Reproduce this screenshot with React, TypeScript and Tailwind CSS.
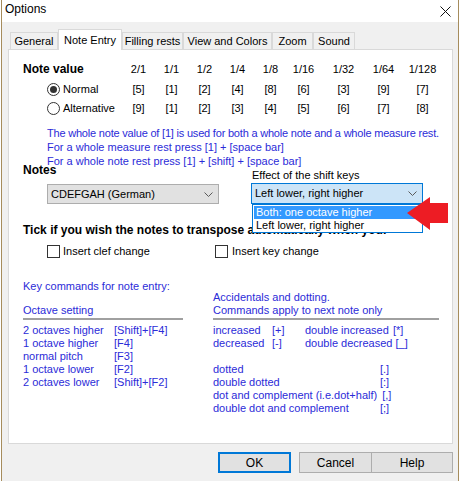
import React from "react";

const fractions = ["2/1", "1/1", "1/2", "1/4", "1/8", "1/16", "1/32", "1/64", "1/128"];
const normalKeys = ["[5]", "[1]", "[2]", "[4]", "[8]", "[6]", "[3]", "[9]", "[7]"];
const altKeys = ["[9]", "[1]", "[2]", "[3]", "[4]", "[5]", "[6]", "[7]", "[8]"];

const octaveRows: [string, string][] = [
  ["2 octaves higher", "[Shift]+[F4]"],
  ["1 octave higher", "[F4]"],
  ["normal pitch", "[F3]"],
  ["1 octave lower", "[F2]"],
  ["2 octaves lower", "[Shift]+[F2]"],
];

const dotRows: [string, string][] = [
  ["dotted", "[.]"],
  ["double dotted", "[:]"],
  ["dot and complement (i.e.dot+half)", "[,]"],
  ["double dot and complement", "[;]"],
];

function Chevron() {
  return (
    <svg width="9" height="5" viewBox="0 0 9 5" className="shrink-0">
      <path d="M0.5 0.5 L4.5 4.5 L8.5 0.5" stroke="#5a5a5a" strokeWidth="1" fill="none" />
    </svg>
  );
}

function Radio({ checked }: { checked?: boolean }) {
  return (
    <span className="w-[13px] h-[13px] rounded-full border border-[#333333] bg-white flex items-center justify-center shrink-0">
      {checked && <span className="w-[7px] h-[7px] rounded-full bg-[#333333]" />}
    </span>
  );
}

function Checkbox() {
  return <span className="w-[13px] h-[13px] border border-[#333333] bg-white shrink-0" />;
}

function Tab({ label, width, active }: { label: string; width: string; active?: boolean }) {
  if (active) {
    return (
      <div
        className={`${width} h-[21px] -mb-px relative z-10 bg-white border border-b-0 border-[#d9d9d9] flex items-start justify-center pt-[3px] text-[11px] leading-[14px]`}
      >
        {label}
      </div>
    );
  }
  return (
    <div
      className={`${width} h-[17px] bg-[#f0f0f0] border border-b-0 border-[#d9d9d9] flex items-center justify-center text-[11px] leading-[14px]`}
    >
      {label}
    </div>
  );
}

export default function App() {
  return (
    <div className="w-[461px] h-[481px] bg-white pl-px pr-[2px] font-['Liberation_Sans',Arial,sans-serif] text-[11px] text-black">
      <div className="relative h-full border-x border-[#a68c5c] bg-[#f0f0f0] flex flex-col">
        {/* title bar */}
        <div className="h-[22px] bg-white flex items-start justify-between">
          <span className="text-[12px] leading-[18px] pl-[3px]">Options</span>
          <svg width="11" height="11" viewBox="0 0 11 11" className="mt-[6px] mr-[7px]">
            <path d="M0.5 0.5 L10.5 10.5 M10.5 0.5 L0.5 10.5" stroke="#111" strokeWidth="1" />
          </svg>
        </div>

        {/* tabs */}
        <div className="h-[27px] flex items-end pl-[8px]">
          <Tab label="General" width="w-[48px]" />
          <Tab label="Note Entry" width="w-[64px]" active />
          <Tab label="Filling rests" width="w-[61px]" />
          <Tab label="View and Colors" width="w-[89px]" />
          <Tab label="Zoom" width="w-[41px]" />
          <Tab label="Sound" width="w-[42px]" />
        </div>

        {/* tab page */}
        <div className="ml-[6px] w-[445px] h-[395px] border border-[#d9d9d9] bg-white pl-[14px] pt-[9px] flex flex-col overflow-hidden">
          {/* note value table */}
          <div className="grid grid-cols-[99px_33px_33px_33px_33px_33px_33px_47px_33px_45px]">
            <div className="h-[20px] flex items-center font-bold text-[12px]">Note value</div>
            {fractions.map((f) => (
              <div key={f} className="h-[20px] flex items-center justify-center">
                {f}
              </div>
            ))}
            <div className="h-[20px] flex items-center pl-[24px] gap-[3px]">
              <Radio checked />
              <span>Normal</span>
            </div>
            {normalKeys.map((k, i) => (
              <div key={`n${i}`} className="h-[20px] flex items-center justify-center">
                {k}
              </div>
            ))}
            <div className="h-[19px] flex items-center pl-[24px] gap-[3px]">
              <Radio />
              <span>Alternative</span>
            </div>
            {altKeys.map((k, i) => (
              <div key={`a${i}`} className="h-[19px] flex items-center justify-center">
                {k}
              </div>
            ))}
          </div>

          {/* whole note hints */}
          <div className="mt-[8px] pl-[24px] leading-[14px] text-[#2b2bd8] whitespace-nowrap">
            <div className="tracking-[-0.2px]">
              The whole note value of [1] is used for both a whole note and a whole measure rest.
            </div>
            <div>For a whole measure rest press [1] + [space bar]</div>
            <div>For a whole note rest press [1] + [shift] + [space bar]</div>
          </div>

          {/* note names and shift keys */}
          <div className="-mt-[6px] flex">
            <div className="w-[228px] flex flex-col">
              <div className="font-bold text-[12px] leading-[16px]">Notes</div>
              <div className="mt-[6px] ml-[24px] w-[172px] h-[20px] bg-[#e1e1e1] border border-[#adadad] flex items-center justify-between pl-[3px] pr-[5px]">
                <span>CDEFGAH (German)</span>
                <Chevron />
              </div>
            </div>
            <div className="flex flex-col pt-[6px]">
              <div className="pl-px leading-[14px]">Effect of the shift keys</div>
              <div className="mt-px w-[172px] h-[21px] bg-[#cce4f7] border border-[#0078d7] flex items-center justify-between pl-[3px] pr-[5px]">
                <span>Left lower, right higher</span>
                <Chevron />
              </div>
            </div>
          </div>

          {/* automatic transpose */}
          <div className="mt-[18px] font-bold text-[12px] leading-[16px] whitespace-nowrap">
            Tick if you wish the notes to transpose automatically when you:
          </div>
          <div className="mt-[5px] h-[16px] flex items-center">
            <div className="w-[192px] pl-[24px] flex items-center gap-[3px]">
              <Checkbox />
              <span>Insert clef change</span>
            </div>
            <div className="flex items-center gap-[4px]">
              <Checkbox />
              <span>Insert key change</span>
            </div>
          </div>

          {/* key command reference */}
          <div className="mt-[20px] leading-[14px] text-[#2b2bd8]">Key commands for note entry:</div>
          <div className="-mt-[2px] flex text-[#2b2bd8] leading-[13px]">
            <div className="w-[190px] flex flex-col">
              <div className="pt-[13px]">Octave setting</div>
              <div className="mt-px h-[2px] w-[160px] bg-[#a0a0a0]" />
              <div className="mt-[4px] flex flex-col">
                {octaveRows.map(([label, key]) => (
                  <div key={label} className="flex">
                    <span className="w-[91px]">{label}</span>
                    <span>{key}</span>
                  </div>
                ))}
              </div>
            </div>
            <div className="flex flex-col">
              <div>Accidentals and dotting.</div>
              <div>Commands apply to next note only</div>
              <div className="mt-px h-[2px] w-[226px] bg-[#a0a0a0]" />
              <div className="mt-[4px] flex flex-col">
                <div className="flex">
                  <span className="w-[59px]">increased</span>
                  <span className="w-[33px]">[+]</span>
                  <span className="min-w-[88px] pr-[3px] shrink-0">double increased</span>
                  <span>[*]</span>
                </div>
                <div className="flex">
                  <span className="w-[59px]">decreased</span>
                  <span className="w-[33px]">[-]</span>
                  <span className="min-w-[88px] pr-[3px] shrink-0">double decreased</span>
                  <span>[_]</span>
                </div>
                <div className="h-[13px]" />
                {dotRows.map(([label, key]) => (
                  <div key={label} className="flex">
                    <span className="min-w-[167px] pr-[5px] shrink-0">{label}</span>
                    <span>{key}</span>
                  </div>
                ))}
              </div>
            </div>
          </div>
        </div>

        {/* dialog buttons */}
        <div className="mt-[8px] flex justify-end pr-[5px]">
          <button className="w-[73px] h-[21px] bg-[#e1e1e1] border-2 border-[#0078d7] text-[12px] flex items-center justify-center">
            OK
          </button>
          <button className="ml-[8px] w-[73px] h-[21px] bg-[#e1e1e1] border border-[#adadad] text-[12px] flex items-center justify-center">
            Cancel
          </button>
          <button className="-ml-px w-[82px] h-[21px] bg-[#e1e1e1] border border-[#adadad] text-[12px] flex items-center justify-center">
            Help
          </button>
        </div>

        {/* open drop-down list of the shift key combo */}
        <div className="absolute left-[250px] top-[204px] w-[171px] h-[29px] bg-white border border-[#0078d7] flex flex-col pt-px px-px">
          <div className="h-[13px] bg-[#3399ff] text-white leading-[13px] pl-[2px]">Both: one octave higher</div>
          <div className="h-[13px] leading-[13px] pl-[2px]">Left lower, right higher</div>
        </div>

        {/* red pointer arrow */}
        <svg width="44" height="36" viewBox="0 0 44 36" className="absolute left-[404px] top-[196px]">
          <polygon points="1,17 24,1 24,7 42,7 42,27 24,27 24,34" fill="#ed1c24" />
        </svg>
      </div>
    </div>
  );
}
